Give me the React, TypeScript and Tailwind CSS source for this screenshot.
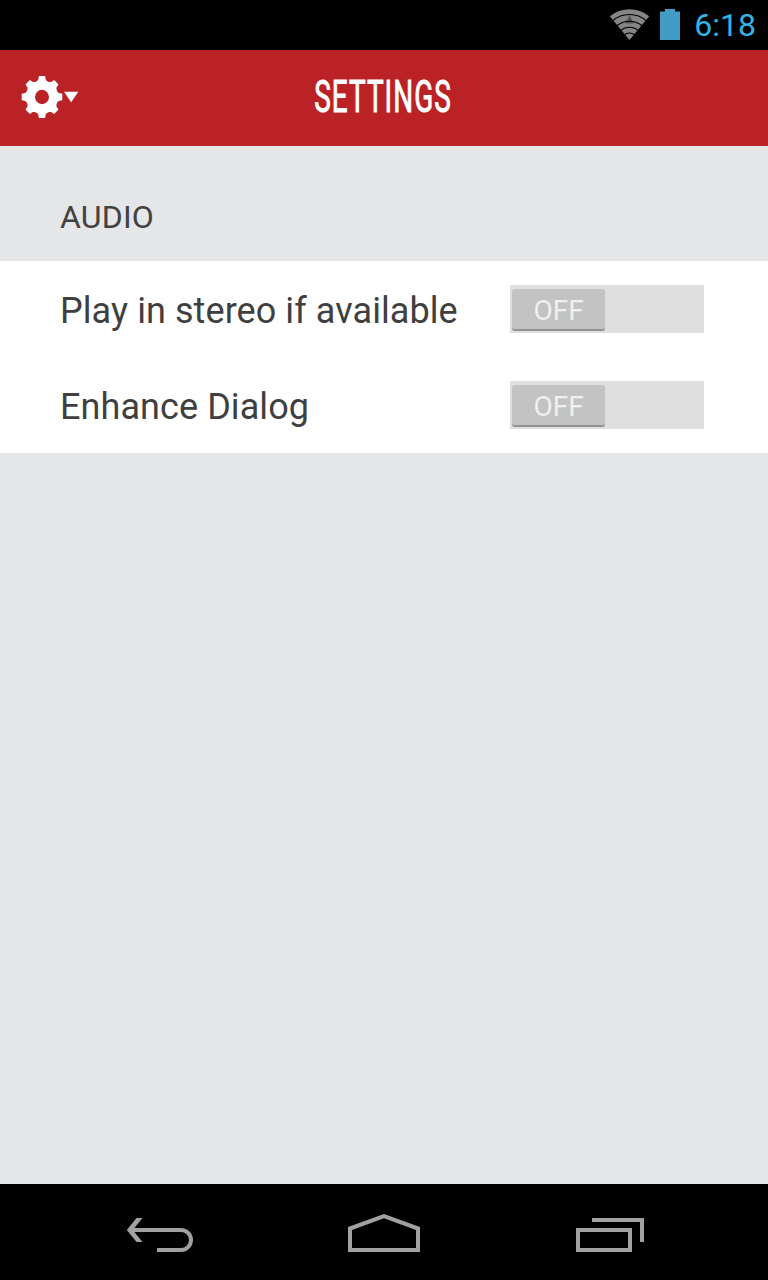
const toothAngles = [0, 45, 90, 135, 180, 225, 270, 315];

function StatusBar() {
  return (
    <div className="flex h-[50px] shrink-0 items-center justify-end bg-black pr-[12px]">
      <svg className="mr-[10px] h-[32px] w-[41px]" viewBox="0 0 41 32" fill="none">
        <path d="M20.5 31 L0.8 7.3 A31 31 0 0 1 40.2 7.3 Z" fill="#858585" />
        <path d="M20.5 6 L24.8 14.5 H16.2 Z" fill="#555" />
        <g stroke="#000" strokeWidth="1.1">
          <path d="M3.5 11.8 A26 26 0 0 1 37.5 11.8" />
          <path d="M7.5 17 A20 20 0 0 1 33.5 17" />
          <path d="M11.5 21.6 A14 14 0 0 1 29.5 21.6" />
          <path d="M15 26 A9 9 0 0 1 26 26" />
        </g>
      </svg>
      <svg className="mr-[14px] h-[32px] w-[20px]" viewBox="0 1 20 32">
        <path d="M0 3.5 H5 V1 H15 V3.5 H20 V32 H0 Z" fill="#429cc5" />
      </svg>
      <span className="text-[32px] leading-[38px] text-[#35b3e3]">6:18</span>
    </div>
  );
}

function GearMenu() {
  return (
    <button className="flex h-[44px] w-[58px] items-center" aria-label="Menu">
      <svg className="h-[44px] w-[58px]" viewBox="0 0 58 44" fill="#fff">
        <g transform="translate(21 21) scale(.97 1)">
          <circle r="11.9" fill="none" stroke="#fff" strokeWidth="9.4" />
          {toothAngles.map((a) => (
            <path key={a} d="M-6 -15 L-3.9 -17.2 L-3.2 -20.9 H3.2 L3.9 -17.2 L6 -15 Z" transform={`rotate(${a})`} />
          ))}
        </g>
        <path d="M43 15.8 H57.3 L50.2 26.3 Z" />
      </svg>
    </button>
  );
}

function Header() {
  return (
    <header className="grid h-[96px] shrink-0 grid-cols-[1fr_auto_1fr] items-center bg-[#bb2225] pl-[21px] pr-[22px]">
      <GearMenu />
      <h1 className="flex w-[140px] justify-center pb-[3px] text-[45px] leading-[50px] font-normal text-white">
        <span className="scale-x-[0.62] tracking-[1.7px] whitespace-nowrap [-webkit-text-stroke:1px_white]">SETTINGS</span>
      </h1>
    </header>
  );
}

function Toggle() {
  return (
    <button role="switch" aria-checked="false" className="flex h-[48px] w-[194px] items-start bg-[#dfdfdf] pt-[4px] pl-[2px]">
      <span className="flex h-[42px] w-[93px] items-center justify-center rounded-[3px] border-b-2 border-[#929292] bg-[#c3c3c3] pt-[3px] text-[28px] leading-[40px] text-[#f0f0f0]">
        OFF
      </span>
    </button>
  );
}

function SettingRow({ label }: { label: string }) {
  return (
    <div className="flex h-[96px] items-center justify-between pr-[64px] pl-[60px]">
      <span className="pt-[4px] text-[36px] leading-[44px] tracking-[0.08px] whitespace-nowrap text-[#3f3f3f]">{label}</span>
      <Toggle />
    </div>
  );
}

function NavigationBar() {
  return (
    <nav className="flex h-[96px] shrink-0 items-center justify-between bg-black pr-[108px] pl-[110px]">
      <svg className="h-[96px] w-[100px]" viewBox="0 0 100 96" fill="none" stroke="#a1a1a1" strokeWidth="4">
        <path d="M20 46 H71 A10 10 0 0 1 71 66 H47" />
        <path d="M16.8 46 L26.5 34 H32.5 L22.8 46 L32.5 58 H26.5 Z" fill="#a1a1a1" stroke="none" />
      </svg>
      <svg className="h-[96px] w-[100px]" viewBox="1 0 100 96" fill="none" stroke="#a1a1a1" strokeWidth="4">
        <path d="M16 66 V44.5 L50 32.2 L84 44.5 V66 Z" />
      </svg>
      <svg className="h-[96px] w-[100px]" viewBox="0 0 100 96" fill="none" stroke="#a1a1a1" strokeWidth="4">
        <path d="M18 46 H70 V66 H18 Z" />
        <path d="M32 36 H82 V58" />
      </svg>
    </nav>
  );
}

export default function App() {
  return (
    <div className="flex h-[1280px] w-[768px] flex-col overflow-hidden bg-[#e5e6e8] font-[Roboto,sans-serif]">
      <StatusBar />
      <Header />
      <main className="flex-1">
        <h2 className="h-[115px] pt-[51px] pl-[60px] text-[32px] leading-[40px] tracking-[0.2px] text-[#424242]">AUDIO</h2>
        <section className="bg-white">
          <SettingRow label="Play in stereo if available" />
          <SettingRow label="Enhance Dialog" />
        </section>
      </main>
      <NavigationBar />
    </div>
  );
}
